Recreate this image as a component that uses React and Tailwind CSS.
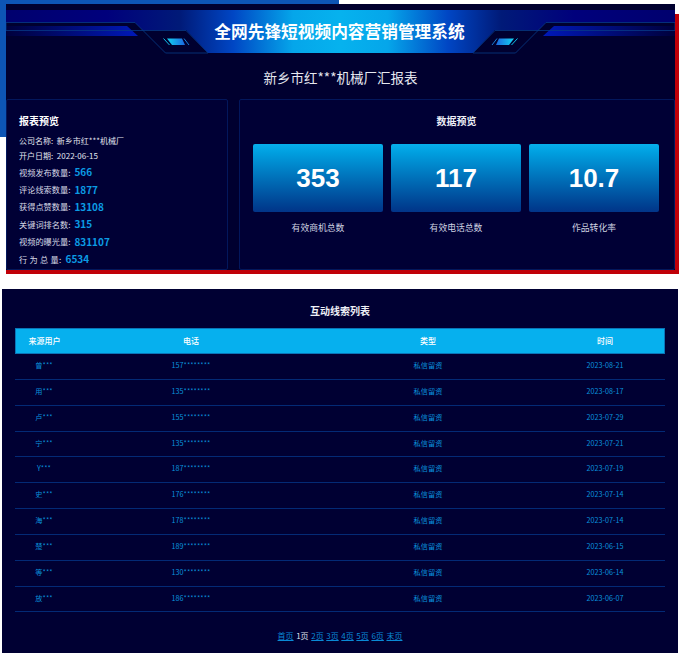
const reportRows = [
  ["视频发布数量:", "566"],
  ["评论线索数量:", "1877"],
  ["获得点赞数量:", "13108"],
  ["关键词排名数:", "315"],
  ["视频的曝光量:", "831107"],
  ["行 为 总 量:", "6534"],
];

const stats = [
  ["353", "有效商机总数"],
  ["117", "有效电话总数"],
  ["10.7", "作品转化率"],
];

const leads = [
  ["曾***", "157********", "2023-08-21"],
  ["用***", "135********", "2023-08-17"],
  ["卢***", "155********", "2023-07-29"],
  ["宁***", "135********", "2023-07-21"],
  ["Y***", "187********", "2023-07-19"],
  ["史***", "176********", "2023-07-14"],
  ["海***", "178********", "2023-07-14"],
  ["楚***", "189********", "2023-06-15"],
  ["等***", "130********", "2023-06-14"],
  ["放***", "186********", "2023-06-07"],
];

const pages = ["2页", "3页", "4页", "5页", "6页", "末页"];

function HeaderArt() {
  const side = (
    <>
      <polygon points="6,10 341,10 341,53 208,53 186,30 6,30" fill="url(#band)" />
      <polygon points="6,22.5 135,22.5 165.5,53 208,53 186,30.5 6,30.5" fill="#00002f" />
      <polygon points="6,26 127,26 138,36 6,36" fill="url(#stripe)" />
      <polygon points="6,30.5 186,30.5 208,53 165.5,53 135,22.5 6,22.5" fill="none" stroke="#063a86" strokeWidth="0.8" />
      <polygon points="167,38.5 182,38.5 185,45 172,45" fill="url(#chip)" />
      <line x1="163.5" y1="38.5" x2="169.5" y2="45" stroke="#0fc0e8" strokeWidth="1" />
      <line x1="184" y1="38.5" x2="189" y2="45" stroke="#1b7fd8" strokeWidth="1" />
    </>
  );
  return (
    <svg className="absolute left-0 top-0" width="669" height="60" viewBox="6 4 669 60">
      <defs>
        <linearGradient id="band" x1="6" x2="340" y1="0" y2="0" gradientUnits="userSpaceOnUse">
          <stop offset="0" stopColor="#00006e" />
          <stop offset="0.3" stopColor="#00007c" />
          <stop offset="0.52" stopColor="#001a78" />
          <stop offset="0.68" stopColor="#0046c4" />
          <stop offset="0.86" stopColor="#05a6ea" />
          <stop offset="1" stopColor="#06b2ee" />
        </linearGradient>
        <linearGradient id="stripe" x1="6" x2="138" y1="0" y2="0" gradientUnits="userSpaceOnUse">
          <stop offset="0" stopColor="#00003c" />
          <stop offset="1" stopColor="#0018b8" />
        </linearGradient>
        <linearGradient id="chip" x1="167" x2="185" y1="0" y2="0" gradientUnits="userSpaceOnUse">
          <stop offset="0" stopColor="#12d2f0" />
          <stop offset="1" stopColor="#1c66e0" />
        </linearGradient>
      </defs>
      {side}
      <g transform="matrix(-1 0 0 1 681 0)">{side}</g>
    </svg>
  );
}

export default function App() {
  return (
    <div
      className="relative h-[653px] w-[679px] overflow-hidden bg-white"
      style={{ fontFamily: '"Noto Sans CJK SC", "Liberation Sans", sans-serif' }}
    >
      <div className="absolute left-0 top-0 h-[137px] w-[339px] bg-[#0d55b5]" />
      <div className="absolute right-0 top-[14px] h-[260px] w-[400px] bg-[#c00008]" />
      <div className="absolute left-[6px] top-[100px] h-[174px] w-[300px] bg-[#c00008]" />

      <section className="relative ml-[6px] mt-[4px] flex h-[266px] w-[669px] flex-col bg-[#00002f]">
        <HeaderArt />
        <h1 className="relative flex h-[49px] items-center justify-center pr-[2px] pt-[7px] text-[16.7px] font-bold text-white">
          全网先锋短视频内容营销管理系统
        </h1>
        <p className="relative mt-[13px] text-center text-[13.5px] leading-[22px] text-[#e6e8f0]">
          新乡市红***机械厂汇报表
        </p>

        <div className="mt-[11px] flex flex-1 gap-[11px]">
          <div className="w-[222px] rounded-[2px] border border-[#03175c] bg-[#000035] pl-[12px] pt-[14px]">
            <h2 className="text-[10px] font-bold leading-[14px] text-white">报表预览</h2>
            <p className="mt-[5px] text-[8px] leading-[15px] text-[#e4e6f0]">公司名称:&nbsp; 新乡市红***机械厂</p>
            <p className="text-[8px] leading-[15px] text-[#e4e6f0]">开户日期:&nbsp; 2022-06-15</p>
            {reportRows.map(([label, value], i) => (
              <p key={label} className="flex h-[17.4px] items-center gap-[4px] text-[8.2px] text-[#d6d9e6]">
                <span className={i === 5 ? "tracking-[0.25px]" : ""}>{label}</span>
                <span className="text-[10px] font-bold text-[#0b9be4]">{value}</span>
              </p>
            ))}
          </div>

          <div className="flex-1 rounded-[2px] border border-[#03175c] bg-[#000035] pl-[13px] pt-[14px]">
            <h2 className="pr-[14px] text-center text-[10px] font-bold leading-[14px] text-[#eceef6]">数据预览</h2>
            <div className="mt-[16px] grid grid-cols-[130px_130px_130px] gap-[8px]">
              {stats.map(([value, label]) => (
                <div key={label}>
                  <div
                    className="flex h-[68px] items-center justify-center rounded-[2px] bg-gradient-to-b from-[#07afec] to-[#023488] text-[26px] font-bold text-white"
                    style={{ fontFamily: '"Liberation Sans", sans-serif' }}
                  >
                    {value}
                  </div>
                  <p className="mt-[10px] text-center text-[8.8px] leading-[12px] text-[#cfd3e2]">{label}</p>
                </div>
              ))}
            </div>
          </div>
        </div>
      </section>

      <section className="ml-[2px] mt-[19px] h-[364px] w-[676px] bg-[#000033] px-[13px] pt-[15px]">
        <h2 className="text-center text-[10px] font-bold leading-[14px] text-[#eef0f6]">互动线索列表</h2>
        <div className="mt-[10px] grid h-[26px] grid-cols-[57px_236px_238px_116px] items-center border border-[#0a75b8] bg-[#06b0ee] text-center text-[8px] font-medium text-white">
          <span>来源用户</span>
          <span>电话</span>
          <span>类型</span>
          <span>时间</span>
        </div>
        {leads.map(([user, phone, date], i) => (
          <div
            key={i}
            className="grid h-[25.85px] grid-cols-[58px_236px_238px_116px] items-center border-b border-[#032a76] pb-[2px] text-center text-[7.2px] text-[#0a92dc]"
          >
            <span>{user}</span>
            <span>{phone}</span>
            <span>私信留资</span>
            <span>{date}</span>
          </div>
        ))}
        <div className="mt-[18px] flex justify-center gap-[2.6px] text-[8px] leading-[12px] text-[#0a8ad6]">
          <a className="underline">首页</a>
          <span className="text-[#dfe3ee]">1页</span>
          {pages.map((p) => (
            <a key={p} className="underline">{p}</a>
          ))}
        </div>
      </section>
    </div>
  );
}
